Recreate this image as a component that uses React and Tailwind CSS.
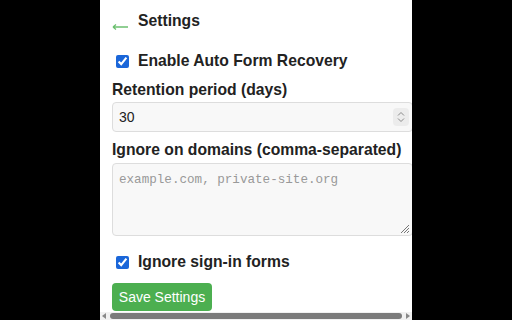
import { useState } from "react";

export default function App() {
  const [enabled, setEnabled] = useState(true);
  const [ignoreSignIn, setIgnoreSignIn] = useState(true);

  return (
    <div className="flex h-[320px] w-[512px] bg-black font-['Liberation_Sans',Arial,sans-serif] text-[#222]">
      <div className="ml-[100px] flex h-full w-[312px] flex-col overflow-hidden bg-white">
        <div className="flex-1 overflow-hidden">
          <div className="w-[330px] pl-3 pt-[11px]">
            {/* Header */}
            <div className="flex h-5 items-center gap-[10px]">
              <svg className="mt-[12px]" width="16" height="8" viewBox="0 0 16 8">
                <path d="M1 4H16M1 4L4 1.5M1 4L4 6.5" stroke="#6cc070" strokeWidth="1.3" fill="none" />
              </svg>
              <h1 className="text-[15.7px] font-bold leading-5">Settings</h1>
            </div>

            {/* Enable toggle */}
            <label className="mt-[21px] flex h-[18px] items-center">
              <input
                type="checkbox"
                checked={enabled}
                onChange={(e) => setEnabled(e.target.checked)}
                className="ml-1 mr-[9px] size-[13px] accent-[#1a66d9]"
              />
              <span className="text-[15.7px] font-bold">Enable Auto Form Recovery</span>
            </label>

            {/* Retention */}
            <div className="mt-[10px] text-[15.7px] font-bold leading-5">Retention period (days)</div>
            <div className="mt-[2px] flex h-[30px] w-[301px] items-center justify-between rounded border border-[#ddd] bg-[#f8f8f8] pl-[6px] pr-[3px] text-[14px]">
              <span>30</span>
              <span className="flex h-[18px] w-[16px] items-center justify-center rounded-sm bg-[#ececec]">
                <svg width="8" height="12" viewBox="0 0 8 12">
                  <path d="M1 4.5L4 1.5L7 4.5M1 7.5L4 10.5L7 7.5" stroke="#8a8a8a" strokeWidth="1" fill="none" />
                </svg>
              </span>
            </div>

            {/* Domains */}
            <div className="mt-[8px] text-[15.7px] font-bold leading-5">Ignore on domains (comma-separated)</div>
            <div className="relative mt-[3px] h-[73px] w-[301px] rounded border border-[#ddd] bg-[#f8f8f8] px-[6px] pt-[7px] font-['Liberation_Mono',monospace] text-[12.6px] text-[#999]">
              example.com, private-site.org
              <svg className="absolute bottom-[1px] right-[2px]" width="10" height="10" viewBox="0 0 10 10">
                <path d="M9 1L1 9M9 4L4 9M9 7L7 9" stroke="#777" strokeWidth="1" />
              </svg>
            </div>

            {/* Sign-in */}
            <label className="mt-[17px] flex h-[18px] items-center">
              <input
                type="checkbox"
                checked={ignoreSignIn}
                onChange={(e) => setIgnoreSignIn(e.target.checked)}
                className="ml-1 mr-[9px] size-[13px] accent-[#1a66d9]"
              />
              <span className="text-[15.7px] font-bold">Ignore sign-in forms</span>
            </label>

            <button className="mt-[12px] h-[28px] w-[100px] rounded bg-[#4caf50] text-[14px] leading-none text-white">
              Save Settings
            </button>
          </div>
        </div>

        {/* Horizontal scrollbar */}
        <div className="flex h-[8px] shrink-0 items-center bg-[#f1f1f1] px-[2px]">
          <span className="h-0 w-0 border-y-[3px] border-r-[4px] border-y-transparent border-r-[#888]" />
          <div className="mx-[4px] h-[6px] flex-1 rounded-full bg-[#7b7b7b]" />
          <span className="h-0 w-0 border-y-[3px] border-l-[4px] border-y-transparent border-l-[#888]" />
        </div>
      </div>
    </div>
  );
}
